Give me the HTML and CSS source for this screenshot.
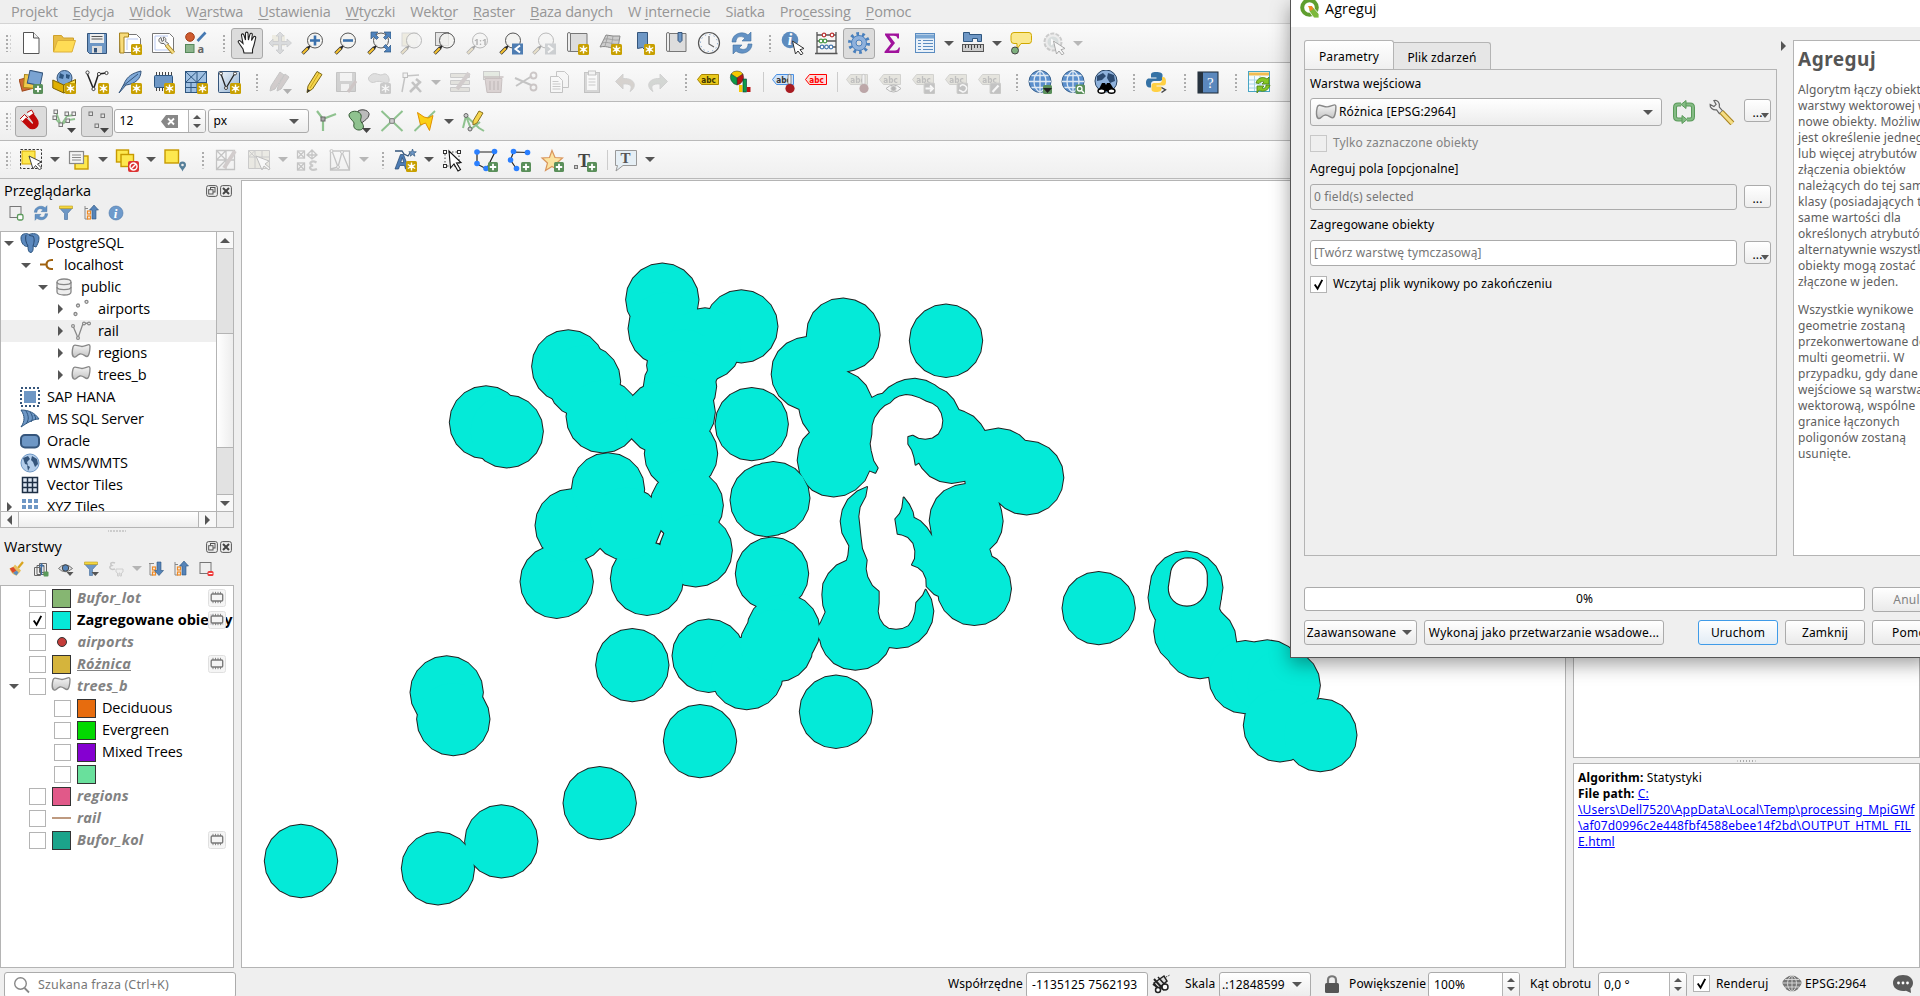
FILE: index.html
```
<!DOCTYPE html>
<html lang="pl">
<head>
<meta charset="utf-8">
<title>QGIS</title>
<link rel="stylesheet" href="styles.css">
</head>
<body>
<svg class="sprite" width="0" height="0">
<defs>
<linearGradient id="gGrey" x1="0" y1="0" x2="0" y2="1"><stop offset="0" stop-color="#f4f4f4"/><stop offset="1" stop-color="#c4c4c4"/></linearGradient>
<linearGradient id="gBlue" x1="0" y1="0" x2="1" y2="1"><stop offset="0" stop-color="#f2f6fa"/><stop offset="1" stop-color="#8fb0d2"/></linearGradient>
</defs>
<symbol id="new-badge" viewBox="0 0 24 24"><rect x="13" y="13" width="11" height="11" rx="1.500" fill="#c8a000"/><path d="M18.500 14.500v8M14.800 16.500l7.400 4M22.200 16.500l-7.400 4" stroke="#fff" stroke-width="1.400"/><circle cx="18.500" cy="18.500" r="2" fill="#fff"/></symbol>
<symbol id="add-badge" viewBox="0 0 24 24"><rect x="14" y="14" width="10" height="10" rx="1.500" fill="#5a8f5a"/><path d="M19 15.800v6.400M15.800 19h6.400" stroke="#fff" stroke-width="1.800"/></symbol>
<symbol id="corner-arrow" viewBox="0 0 24 24"><path d="M15 19h9l-4.500 5z" fill="#444"/></symbol>
<symbol id="lens" viewBox="0 0 24 24"><path d="M1.500 22.500l6-6" stroke="#333" stroke-width="3.400"/><path d="M1.800 22.200l5-5" stroke="#f7c331" stroke-width="2"/><path d="M7 17l3-3" stroke="#222" stroke-width="2"/><circle cx="14" cy="9.500" r="7.500" fill="#f2f2f0" fill-opacity=".85" stroke="#555"/></symbol>
<symbol id="file" viewBox="0 0 24 24"><path d="M4.500 1.500h10l5.500 5.500v15.500h-15.500z" fill="#fff" stroke="#555"/><path d="M14.500 1.500v5.500h5.500" fill="#eee" stroke="#555"/></symbol>
<symbol id="open" viewBox="0 0 24 24"><path d="M1.500 21V4.500h8l2 2.500h10v3" fill="#e8bd45" stroke="#cfa12c"/><path d="M1.500 21l4-11.500h18l-3.500 11.500z" fill="#ffdc55" stroke="#dcb03a"/></symbol>
<symbol id="save" viewBox="0 0 24 24"><path d="M2.500 2.500h19v20h-17l-2-2z" fill="#6e97c5" stroke="#35557b"/><rect x="5" y="3" width="14" height="9" fill="#eee"/><path d="M6.500 5.500h11M6.500 8h11" stroke="#555"/><rect x="7" y="15" width="10" height="7" fill="#ddd"/><rect x="9" y="17" width="3" height="4.500" fill="#35557b"/></symbol>
<symbol id="layout-new" viewBox="0 0 24 24"><path d="M1.500 3.500h17l4 4v14h-21z" fill="#fff" stroke="#777"/><path d="M1.500 2h9v4h-4.500v16H2z" fill="#f8dc7c" stroke="#a8831b"/><path d="M9 8h11M9 8v11" stroke="#b9c9f2"/><use href="#new-badge"/></symbol>
<symbol id="layout-mgr" viewBox="0 0 24 24"><path d="M1.500 2.500h17l4 4v15h-21z" fill="#fff" stroke="#777"/><path d="M4 5h13M4 5v14h14" stroke="#b9c9f2" fill="none"/><path d="M10 6.500c-3 1-3 5 1 6l2 0 2 2.500 2.500-2.500-3-2c1-3-.5-5-2.500-4l1 2.500-2 1.500z" fill="#eee" stroke="#666"/><path d="M15.500 14l7 8" stroke="#a98420" stroke-width="4"/><path d="M15.500 14l7 8" stroke="#f5dd84" stroke-width="2.200"/></symbol>
<symbol id="style" viewBox="0 0 24 24"><circle cx="6" cy="6" r="4.300" fill="#cf5c30" stroke="#a33e18"/><path d="M13.500 10l8-8.500" stroke="#4679b2" stroke-width="2.600"/><rect x="1.500" y="13.500" width="8.500" height="8" fill="#8cb48c" stroke="#55875a"/><text x="13.500" y="22" font-family="Noto Sans" font-size="11" font-weight="700" fill="#666">a</text></symbol>
<symbol id="hand" viewBox="0 0 24 24"><path d="M9 22l-1-4-4.500-6.500c-1-1.600 1-2.600 2-1.400L8 12.500 6.500 4.500c-.3-2 2-2.200 2.400-.5L10.500 9V2.500c0-1.900 2.400-1.900 2.500 0L13.400 9l1.600-5.800c.5-1.600 2.500-1 2.300.5L16.500 9.500l2-3.500c.9-1.300 2.600-.4 2.100 1.100L19 14l-1.500 4.500V22z" fill="#fff" stroke="#222" stroke-width="1.100"/></symbol>
<symbol id="pan-sel" viewBox="0 0 24 24"><rect x="4" y="4" width="13" height="11" fill="#e8dc9c"/><path d="M12 1l4 4h-2.500v5.500H19V8l4.500 4-4.500 4v-2.500h-5.500V19H16l-4 4-4-4h2.500v-5.500H5V16L1 12l4-4v2.500h5.500V5H8z" fill="#aab4c0" stroke="#7f8894" stroke-width=".8"/></symbol>
<symbol id="zoom-in" viewBox="0 0 24 24"><use href="#lens"/><path d="M14 4.500v10M9 9.500h10" stroke="#3b71ad" stroke-width="2.600"/></symbol>
<symbol id="zoom-out" viewBox="0 0 24 24"><use href="#lens"/><path d="M9 9.500h10" stroke="#3b71ad" stroke-width="2.600"/></symbol>
<symbol id="zoom-full" viewBox="0 0 24 24"><use href="#lens"/><path d="M4 1h7L8.500 3.500l3 3-2 2-3-3L4 8zM24 1h-7l2.500 2.500-3 3 2 2 3-3L24 8zM24 21h-7l2.500-2.500-3-3 2-2 3 3L24 14z" fill="#4f83bd" stroke="#2e5680" stroke-width=".7"/></symbol>
<symbol id="zoom-sel" viewBox="0 0 24 24"><rect x="2" y="2" width="15" height="13" fill="#eadc8f" stroke="#aaa"/><use href="#lens"/></symbol>
<symbol id="zoom-layer" viewBox="0 0 24 24"><rect x="2.500" y="1.500" width="13" height="13" fill="#e5e5e5" stroke="#888"/><use href="#lens"/></symbol>
<symbol id="zoom-native" viewBox="0 0 24 24"><use href="#lens"/><text x="8" y="13.500" font-size="9" font-weight="700" fill="#444" font-family="Noto Sans">1:1</text></symbol>
<symbol id="zoom-last" viewBox="0 0 24 24"><use href="#lens"/><rect x="13" y="12.500" width="11" height="11" fill="#4e7db2"/><path d="M21 14.500l-4.500 3.500 4.500 3.500" stroke="#fff" stroke-width="2" fill="none"/></symbol>
<symbol id="zoom-next" viewBox="0 0 24 24"><use href="#lens"/><rect x="13" y="12.500" width="11" height="11" fill="#8899aa"/><path d="M16 14.500l4.500 3.500-4.500 3.500" stroke="#fff" stroke-width="2" fill="none"/></symbol>
<symbol id="map-new" viewBox="0 0 24 24"><path d="M5 2.500h17v18H5z" fill="#ddd" stroke="#777"/><rect x="2.500" y="1.500" width="3" height="19" rx="1.500" fill="#eee" stroke="#777"/><use href="#new-badge"/></symbol>
<symbol id="map-3d" viewBox="0 0 24 24"><path d="M2 16L8 4l7 1 7 0-2 12c-6 2-10-3-18-1z" fill="#ccc" stroke="#888"/><path d="M4 12c7-2 10 2 17 1M6 8c6-1 9 2 15 1M10 4l-3 11M15 5l-2 12" stroke="#999" fill="none" stroke-width=".8"/><use href="#new-badge"/></symbol>
<symbol id="bm-new" viewBox="0 0 24 24"><path d="M6.500 1.500h10v20l-5-5-5 1z" fill="#6e97c5" stroke="#35557b"/><use href="#new-badge"/></symbol>
<symbol id="bm-show" viewBox="0 0 24 24"><path d="M5 2.500h17v18H5z" fill="#ddd" stroke="#777"/><rect x="2.500" y="1.500" width="3" height="19" rx="1.500" fill="#eee" stroke="#777"/><path d="M14 1.500h4v8l-2 2-2-2z" fill="#6e97c5" stroke="#35557b"/></symbol>
<symbol id="clock" viewBox="0 0 24 24"><circle cx="12" cy="12" r="10.500" fill="#f6f6f6" stroke="#555" stroke-width="1.200"/><circle cx="12" cy="12" r="8.500" fill="none" stroke="#7fa1c8" stroke-dasharray="1.300 3.150"/><path d="M12 5v8l5 3" stroke="#666" stroke-width="1.200" fill="none"/></symbol>
<symbol id="refresh" viewBox="0 0 24 24"><path d="M2 11C2 3 12-1 18 4l3-3v9h-9l3-3C10 4 6 6 6 11z" fill="#6392c5" stroke="#41719f" stroke-width=".6"/><path d="M22 13c0 8-10 12-16 7l-3 3v-9h9l-3 3c5 3 9 1 9-4z" fill="#6392c5" stroke="#41719f" stroke-width=".6"/></symbol>
<symbol id="cursor" viewBox="0 0 24 24"><path d="M11.500 10l3 13 2.500-3 3 4 2-1.600-3-3.700 4-1.200z" fill="#fff" stroke="#333"/></symbol>
<symbol id="identify" viewBox="0 0 24 24"><circle cx="9" cy="9" r="8.300" fill="#5c8bbe"/><text x="6.800" y="14" font-family="Liberation Serif" font-size="16" font-style="italic" font-weight="700" fill="#fff">i</text><use href="#cursor"/></symbol>
<symbol id="abacus" viewBox="0 0 24 24"><path d="M3 1v21M22 1v21M1 22.500h22.500M3 4h19M3 10h19M3 16h19" stroke="#555" stroke-width="1.300"/><g fill="#fff" stroke-width="1.200"><g stroke="#b33"><circle cx="10" cy="4" r="1.800"/><circle cx="18" cy="4" r="1.800"/></g><g stroke="#4a9a4a"><circle cx="7" cy="10" r="1.800"/><circle cx="11" cy="10" r="1.800"/></g><g stroke="#4a7ab0"><circle cx="8" cy="16" r="1.800"/><circle cx="12.500" cy="16" r="1.800"/><circle cx="17" cy="16" r="1.800"/></g></g></symbol>
<symbol id="gear" viewBox="0 0 24 24"><circle cx="12" cy="12" r="9" fill="none" stroke="#4a80bd" stroke-width="4" stroke-dasharray="2.600 3.054"/><circle cx="12" cy="12" r="7.500" fill="#8fb1dc" stroke="#4a80bd"/><circle cx="12" cy="12" r="3" fill="#ddd" stroke="#4a80bd"/></symbol>
<symbol id="sigma" viewBox="0 0 24 24"><path d="M5 2.500h14v5h-1.500c-.5-2-1.500-2.700-4-2.700H9.500L15 12l-6 7.500h6c2 0 3-1 3.800-3H20l-1 5.500H4.500v-1.300L11 12.500 5 4z" fill="#a0129c"/></symbol>
<symbol id="table" viewBox="0 0 24 24"><rect x="2.500" y="2.500" width="19" height="19" fill="#e9f1f9" stroke="#5b8cc0"/><path d="M3 5.500h18" stroke="#7ba7d3" stroke-width="4"/><path d="M5 9.500h3M10 9.500h10M5 12.500h3M10 12.500h10M5 15.500h3M10 15.500h10M5 18.500h3M10 18.500h10" stroke="#5b8cc0"/></symbol>
<symbol id="measure" viewBox="0 0 24 24"><path d="M2.500 1.500h6v2h12v7h-4v-3h-5v3h-9z" fill="#6e97c5" stroke="#2e5680"/><rect x="1.500" y="13.500" width="21" height="7" fill="#ccc" stroke="#555"/><path d="M4.500 14v3M7.500 14v3M10.500 14v5M13.500 14v3M16.500 14v3M19.500 14v3" stroke="#444"/></symbol>
<symbol id="tip" viewBox="0 0 24 24"><path d="M5 1.500h15q2.500 0 2.500 3v5q0 3-2.500 3h-8L8 18l0-5.500H5q-3 0-3-3v-5q0-3 3-3z" fill="#fae88e" stroke="#d0a800"/><circle cx="6" cy="19.500" r="3.500" fill="#7eb07e" stroke="#444"/></symbol>
<symbol id="action" viewBox="0 0 24 24"><circle cx="11" cy="11" r="8.500" fill="#ddd" stroke="#888" stroke-width="2" stroke-dasharray="4 1.300"/><circle cx="11" cy="11" r="5.500" fill="#9bb"/><path d="M9 7.500l5.500 3.500L9 14.500z" fill="#fff"/><use href="#cursor"/></symbol>
<symbol id="ds" viewBox="0 0 24 24"><rect x="1.500" y="8" width="12" height="12" transform="rotate(-15 7 14)" fill="#cf6a35" stroke="#a04a1d"/><rect x="5" y="5" width="13" height="13" fill="#f0c84c" stroke="#a88216" transform="rotate(5 11 11)"/><rect x="9.500" y="1.500" width="13" height="13" fill="#7aa3d2" stroke="#35557b" transform="rotate(12 16 8)"/><use href="#add-badge"/></symbol>
<symbol id="gpkg" viewBox="0 0 24 24"><circle cx="12.500" cy="8" r="7.500" fill="#7da7d6" stroke="#35557b"/><path d="M8 3l4 2-1 4-4-1zM14 4l4 1-1 4-3-1z" fill="#2e5680"/><path d="M.8 10l11 5v8L.8 18z" fill="#e0b000" stroke="#7d6200"/><path d="M11.800 15L23.500 9.500v8L11.800 23z" fill="#fbe04e" stroke="#7d6200"/><use href="#new-badge"/></symbol>
<symbol id="shp" viewBox="0 0 24 24"><path d="M2 3l6.500 16L13.500 4l8-1" fill="none" stroke="#222" stroke-width="1.500"/><g fill="#fff" stroke="#444"><circle cx="2.500" cy="2.500" r="1.600"/><circle cx="8.500" cy="19" r="1.600"/><circle cx="14" cy="4" r="1.600"/><circle cx="21.500" cy="3" r="1.600"/></g><use href="#new-badge"/></symbol>
<symbol id="feather" viewBox="0 0 24 24"><path d="M1 23L6 14C9 6 15 3 23 1c0 8-6 13-15 14z" fill="#7fa9d8" stroke="#35557b"/><path d="M5 16L20 4" stroke="#35557b"/><use href="#new-badge"/></symbol>
<symbol id="mem" viewBox="0 0 24 24"><path d="M5.500 2v19M8.500 2v19M11.500 2v19M14.500 2v19M17.500 2v12M20.500 2v12" stroke="#444"/><rect x="3.500" y="5.500" width="18" height="12" rx="1" fill="#6e97c5" stroke="#2e5680"/><use href="#new-badge"/></symbol>
<symbol id="mesh" viewBox="0 0 24 24"><rect x="1.500" y="1.500" width="21" height="21" fill="#9fc0e2" stroke="#2e5680"/><path d="M1.500 12.500h21M13 1.500v21M1.500 1.500L13 12.500M13 1.500L1.500 12.500M22.500 1.500L13 12.500M7 12.500v10M1.500 17.500h11" stroke="#2e5680"/><use href="#new-badge"/></symbol>
<symbol id="virt" viewBox="0 0 24 24"><rect x="1.500" y="1.500" width="21" height="21" rx="1" fill="url(#gBlue)" stroke="#35557b"/><path d="M4 4l5 14L17.500 4" fill="none" stroke="#222" stroke-width="1.300"/><g fill="#fff" stroke="#444"><circle cx="4" cy="3.500" r="1.500"/><circle cx="9" cy="18" r="1.500"/><circle cx="18" cy="3.500" r="1.500"/></g><use href="#new-badge"/></symbol>
<symbol id="pencil" viewBox="0 0 24 24"><path d="M6 22.500l1-6.500L16 1.500l5 3L11.500 19z" fill="#f6d64f" stroke="#7d6715"/><path d="M18 3L9 18" stroke="#c9a51c"/><path d="M6 23l.7-4 2.500 1.600z" fill="#333"/></symbol>
<symbol id="pencils" viewBox="0 0 24 24"><path d="M2 21l1-5L12 2l4 3L7 19zM9 21l1-5L17 4l4 3-8 12z" fill="#a88" stroke="#777"/></symbol>
<symbol id="save-ed" viewBox="0 0 24 24"><path d="M2.500 2.500h19v19h-19z" fill="#999" stroke="#777"/><rect x="6" y="3" width="12" height="8" fill="#eee"/><rect x="7" y="14" width="8" height="7" fill="#eee"/><path d="M14 22l8-11" stroke="#a77" stroke-width="3"/></symbol>
<symbol id="poly-add" viewBox="0 0 24 24"><path d="M4 5c5-4 8 2 13-1 5-1 7 9 3 9s-8-3-12-1S-2 9 4 5z" fill="#bbb" stroke="#888"/><rect x="13" y="13" width="11" height="11" rx="1.500" fill="#888"/><path d="M18.500 14.500v8M14.800 16.500l7.400 4M22.200 16.500l-7.400 4" stroke="#fff" stroke-width="1.400"/></symbol>
<symbol id="vertex" viewBox="0 0 24 24"><path d="M5 6l14-1M5 6L2 22" stroke="#777" stroke-width="1.500"/><rect x="3" y="3" width="4.500" height="4.500" fill="#eee" stroke="#666"/><path d="M10 22L20 12M12 12l9 10M16 9l5 4" stroke="#777" stroke-width="2.600"/></symbol>
<symbol id="form-ed" viewBox="0 0 24 24"><path d="M2.500 3.500h19v4h-19zM2.500 10.500h19v4h-19zM2.500 17.500h19v4h-19z" fill="#cbc6a8" stroke="#888"/><path d="M9 19L21 3" stroke="#a88" stroke-width="4"/></symbol>
<symbol id="del" viewBox="0 0 24 24"><rect x="2.500" y="1.500" width="16" height="8" fill="#bda" stroke="#888"/><path d="M4 8.500h17l-1 14H6z" fill="#c99" stroke="#966"/><path d="M2.500 7h20M9 11v9M13 11v9M17 11v9" stroke="#966" stroke-width="1.500"/></symbol>
<symbol id="cut" viewBox="0 0 24 24"><path d="M1 8l16 7M2 16L18 6" stroke="#777" stroke-width="2"/><circle cx="19.500" cy="5.500" r="3" fill="none" stroke="#977" stroke-width="1.800"/><circle cx="19.500" cy="17.500" r="3" fill="none" stroke="#977" stroke-width="1.800"/></symbol>
<symbol id="copy" viewBox="0 0 24 24"><path d="M9.500 1.500h8l4 4v12h-12z" fill="#f6f6f6" stroke="#777"/><path d="M3.500 6.500h8l4 4v12h-12z" fill="#fff" stroke="#777"/><path d="M5.500 11.500h6M5.500 14h8M5.500 16.500h8M5.500 19h8" stroke="#888"/></symbol>
<symbol id="paste" viewBox="0 0 24 24"><rect x="4.500" y="2.500" width="15" height="20" fill="#aaa" stroke="#777"/><rect x="7" y="5" width="10" height="15" fill="#fff"/><rect x="8.500" y="1" width="7" height="4" fill="#eee" stroke="#777"/><path d="M8.500 9h7M8.500 12h7M8.500 15h7" stroke="#888"/></symbol>
<symbol id="undo" viewBox="0 0 24 24"><path d="M10 4v4.500c13-.5 14 9 7 13 3-6 0-8-7-7.500V19L2.500 11.500z" fill="#b39a80" stroke="#999"/></symbol>
<symbol id="redo" viewBox="0 0 24 24"><path d="M14 4v4.500c-13-.5-14 9-7 13-3-6 0-8 7-7.500V19l7.500-7.500z" fill="#9a9" stroke="#999"/></symbol>
<symbol id="tag" viewBox="0 0 24 24"><path d="M1.500 9.500L5.500 4.500h17v10h-17z"/><text x="5.300" y="12.700" font-family="DejaVu Sans" font-size="8.500" font-weight="700" letter-spacing="0" textLength="14.500" lengthAdjust="spacingAndGlyphs" stroke="none" class="tagtext">abc</text></symbol>
<symbol id="chart" viewBox="0 0 24 24"><path d="M8 8L2 4a7 7 0 0 1 6-3 7 7 0 0 1 6 3z" fill="#f7c800" stroke="#333" stroke-width=".5"/><path d="M8 8l6-4a8 8 0 0 1-6 11z" fill="#b81414" stroke="#333" stroke-width=".5"/><path d="M8 8v7A8 8 0 0 1 2 4z" fill="#0d9a4a" stroke="#333" stroke-width=".5"/><rect x="10" y="15" width="3.500" height="7" fill="#f7c800"/><rect x="14" y="9" width="3.500" height="13" fill="#0d9a4a" stroke="#033" stroke-width=".6"/><rect x="18" y="17" width="3.500" height="5" fill="#b81414"/></symbol>
<symbol id="pin" viewBox="0 0 24 24"><path d="M17 5q2-1.500 3 0l0 9h-3z" fill="#eee" stroke="#666" stroke-width=".7"/><circle cx="19" cy="18.500" r="4.600" fill="#a81c22" stroke="none"/></symbol>
<symbol id="badge-arrow" viewBox="0 0 24 24"><rect x="13" y="13" width="11" height="11" rx="1.500" fill="#777"/><path d="M14.500 18.500h7M19 15.500l3 3-3 3" stroke="#fff" stroke-width="1.800" fill="none"/></symbol>
<symbol id="eye-b" viewBox="0 0 24 24"><path d="M8 18.500q7.500-7 15 0-7.500 7-15 0z" fill="#fff" stroke="#555"/><circle cx="15.500" cy="18.500" r="2.600" fill="#555"/></symbol>
<symbol id="badge-rot" viewBox="0 0 24 24"><rect x="13" y="13" width="11" height="11" rx="1.500" fill="#777"/><path d="M16 16.500a3.500 3.500 0 1 1 1.500 5M15 20l3 1.500" stroke="#fff" stroke-width="1.500" fill="none"/></symbol>
<symbol id="badge-pen" viewBox="0 0 24 24"><rect x="13" y="13" width="11" height="11" rx="1.500" fill="#777"/><path d="M15.500 22L21.500 15.500" stroke="#fff" stroke-width="2.200"/></symbol>
<symbol id="globe" viewBox="0 0 24 24"><circle cx="12" cy="11.500" r="11" fill="#5b8fcc" stroke="#38608c"/><path d="M12 .5v22M1 11.500h22M3.500 5.500h17M3.500 17.500h17M12 .5c-8 5-8 17 0 22M12 .5c8 5 8 17 0 22" stroke="#dfe9f3" fill="none" stroke-width="1.300"/></symbol>
<symbol id="web1" viewBox="0 0 24 24"><use href="#globe"/><rect x="15" y="15" width="9" height="9" rx="1.500" fill="#5a8f5a"/><path d="M15 18h9l-4.500 5z" fill="#222"/></symbol>
<symbol id="web2" viewBox="0 0 24 24"><use href="#globe"/><rect x="14.500" y="14.500" width="9.500" height="9.500" rx="1.500" fill="#5a8f5a"/><circle cx="18.700" cy="18.700" r="2.300" fill="none" stroke="#fff" stroke-width="1.300"/><path d="M20.500 20.500l2.500 2.500" stroke="#fff" stroke-width="1.500"/></symbol>
<symbol id="web3" viewBox="0 0 24 24"><circle cx="12" cy="11" r="11" fill="#8fb2dc" stroke="#26405f"/><path d="M3 6l6-3 3 3-4 4-5 1zM14 3l6 2 1 6-5 2-3-5z" fill="#2c4a70"/><path d="M4 21l4-8h3l1 2 1-2h3l5 8z" fill="#000"/><ellipse cx="7.500" cy="21" rx="3.500" ry="2.300" fill="#fff" stroke="#000" stroke-width="1.400"/><ellipse cx="17.500" cy="21" rx="3.500" ry="2.300" fill="#fff" stroke="#000" stroke-width="1.400"/></symbol>
<symbol id="python" viewBox="0 0 24 24"><path d="M11 2c-4 0-5 1-5 3v2.500h5.500v1H4C1.500 8.500 1 11 1 13s1 4.500 3 4.500h2V14c0-2 1.500-3 3-3h6c1.500 0 2.500-1 2.500-2.500V5c0-2-2-3-6.500-3z" fill="#3572a5"/><path d="M11 22c4 0 5.500-1 5.500-3v-2.500h-5v-1H18c2.500 0 3-1.500 3-4s-1-4.500-3-4.500h-1V10c0 2-1.500 3-3 3H9c-1.500 0-2.500 1-2.500 2.500V19c0 2 1 3 4.500 3z" fill="#ffd044"/><path d="M16.500 17.500l4 2.300-4 2.700" stroke="#444" stroke-width="1.400" fill="none"/></symbol>
<symbol id="help" viewBox="0 0 24 24"><rect x="2" y="2" width="20" height="21" fill="#5b88bd" stroke="#1b2733"/><path d="M2 2h5v21H2z" fill="#27333f"/><text x="11" y="18" font-family="Liberation Serif" font-size="15" fill="#fff">?</text></symbol>
<symbol id="tbl-refresh" viewBox="0 0 24 24"><rect x="1.500" y="1.500" width="21" height="20" fill="#f4fbff" stroke="#48a5c4"/><path d="M2 4h20" stroke="#f1bd52" stroke-width="3"/><path d="M7.500 6v15M13 6v15M2 10h20M2 14h20M2 18h20" stroke="#a9d4e6"/><path d="M9 13c1-5 7-7 11-4l2-2v7h-7l2-2c-2-1-4 0-5 1.500zM23 15c-1 5-7 8-11 5l-2 3v-7h7l-2 2c2 1 4 0 4-3z" fill="#86c725" stroke="#4a7d0f" stroke-width=".8"/></symbol>
<symbol id="magnet" viewBox="0 0 24 24"><path d="M4 9.500l7 7c3 3 8-1 5-5l-5-7" fill="none" stroke="#c00a0a" stroke-width="5.600"/><path d="M2.300 11.200l4-4M9 6.200l4.600-3.400" stroke="#fff" stroke-width="3"/><path d="M1 10l4.500-4.500 3.500 3.500M8 3.500L12.500 1l2.500 4" fill="none" stroke="#c00a0a"/></symbol>
<symbol id="snap-cfg" viewBox="0 0 24 24"><path d="M4 3l5 13 6-9 7-1M2 8l7 8M9 16l7-5 7-1" stroke="#8fc28f" stroke-width="1.800" fill="none"/><g fill="#eee" stroke="#777"><rect x="2" y="1" width="3.500" height="3.500"/><rect x="1" y="7" width="3.500" height="3.500"/><rect x="13" y="3" width="3.500" height="3.500"/><rect x="20" y="3" width="3.500" height="3.500"/><rect x="14" y="10" width="3.500" height="3.500"/><rect x="7" y="14" width="3.500" height="3.500"/></g></symbol>
<symbol id="snap-pts" viewBox="0 0 24 24"><g fill="#e2e2e2" stroke="#777"><rect x="4" y="3" width="3.500" height="3.500"/><rect x="16" y="5" width="3.500" height="3.500"/><rect x="10" y="15" width="3.500" height="3.500"/></g></symbol>
<symbol id="topo" viewBox="0 0 24 24"><path d="M3 2l6 8 13-5M9 10v12" stroke="#8fc28f" stroke-width="2.200" fill="none"/><rect x="7" y="8" width="4" height="4" fill="#aaa" stroke="#666"/></symbol>
<symbol id="overlap" viewBox="0 0 24 24"><path d="M11 2c5-3 12 0 11 4s-4 5-6 7-8-2-6-5z" fill="#bbb" stroke="#444"/><path d="M3 4c3-3 10-2 11 2s-2 4 1 8 1 7-3 7-6-3-5-6S-1 8 3 4z" fill="#8fc28f" stroke="#345a34"/></symbol>
<symbol id="cross" viewBox="0 0 24 24"><path d="M1.500 2l21 20M22.500 2L1.500 22" stroke="#8fc28f" stroke-width="2"/><rect x="9.700" y="9.700" width="4.600" height="4.600" rx="1" fill="#ccc" stroke="#777"/></symbol>
<symbol id="bolt" viewBox="0 0 24 24"><path d="M1.500 22L22 2" stroke="#8fc28f" stroke-width="1.800"/><path d="M4.500 3.500l6.500 4.500 4 1 5-2.500-3.500 15-4-7.500-5 2z" fill="#fcd116" stroke="#e09000"/></symbol>
<symbol id="trace" viewBox="0 0 24 24"><path d="M2 19L5 7l13 12 5 3M5 7l5 13 9-7" stroke="#8fc28f" stroke-width="2" fill="none"/><circle cx="5" cy="6.500" r="2" fill="#ccc" stroke="#666"/><circle cx="9" cy="20" r="2" fill="#ccc" stroke="#666"/><path d="M12 12l6-10 4 2-6 10-4 2z" fill="#f6d64f" stroke="#887020"/></symbol>
<symbol id="sel" viewBox="0 0 24 24"><rect x="1.500" y="1.500" width="21" height="19" fill="none" stroke="#333" stroke-dasharray="2.400 1.600"/><rect x="3" y="3" width="13" height="13" fill="#fde84f" stroke="#d8aa00"/><path d="M10 8l4 13 2.500-3.500 4 4.500 2-2-4-4 4-2z" fill="#fff" stroke="#444"/></symbol>
<symbol id="sel-form" viewBox="0 0 24 24"><rect x="8" y="8" width="13" height="13" fill="#fde84f" stroke="#c79a00" stroke-width="1.400"/><rect x="2.500" y="3.500" width="14" height="12" fill="#f4f4f4" stroke="#888" stroke-width="1.200"/><path d="M5 7h9M5 9.500h9M5 12h9" stroke="#888" stroke-width="1.200"/></symbol>
<symbol id="desel" viewBox="0 0 24 24"><rect x="1.500" y="2" width="12" height="12" fill="#fde84f" stroke="#c79a00" stroke-width="1.400"/><rect x="6" y="6.500" width="12.500" height="12" fill="#fde84f" stroke="#c79a00" stroke-width="1.400"/><rect x="13" y="13" width="11" height="11" rx="2" fill="#d33"/><circle cx="18.500" cy="18.500" r="3.500" fill="none" stroke="#fff" stroke-width="1.400"/><path d="M16 21l5-5" stroke="#fff" stroke-width="1.400"/></symbol>
<symbol id="sel-pin" viewBox="0 0 24 24"><rect x="2" y="2" width="13.500" height="13" fill="#fde84f" stroke="#c79a00" stroke-width="1.400"/><path d="M19.500 23.500c-1-3-3.500-4-3.500-6.500a3.500 3.500 0 0 1 7 0c0 2.500-2.500 3.500-3.500 6.500z" fill="#567f99"/><circle cx="19.500" cy="17" r="1.300" fill="#eee"/></symbol>
<symbol id="mesh-ed" viewBox="0 0 24 24"><path d="M2.500 2.500h18v19h-18zM2.500 12h18M12 2.500v19M2.500 2.500L12 12M12 2.500L2.500 12M2.500 21.500L12 12" fill="none" stroke="#777" stroke-width="1.300"/><path d="M10 20L21 3" stroke="#a88" stroke-width="4"/></symbol>
<symbol id="mesh-sel" viewBox="0 0 24 24"><path d="M1.500 2.500h21v18h-21z" fill="#ddd8b0" stroke="#888"/><path d="M1.500 9h21M8 2.500v18M15 2.500v18M1.500 2.500L8 9M8 2.500L1.500 9" stroke="#888"/><path d="M9 8l6 14 2-4 5 4 1-2-5-4 4-3z" fill="#fff" stroke="#666"/></symbol>
<symbol id="mesh-x" viewBox="0 0 24 24"><g fill="none" stroke="#777" stroke-width="1.300"><rect x="2.500" y="3" width="7" height="7"/><path d="M2.500 3l7 7M9.500 3l-7 7M17 2l5 5-5 4-5-4zM12 7h10M17 2v9"/><rect x="2.500" y="15" width="7" height="7"/><path d="M2.500 15l7 7M9.500 15l-7 7"/></g><path d="M21.500 14.500c-5-3-9 1.500-3.500 3.200-6 1-2 6 4 3.300" stroke="#888" stroke-width="2.200" fill="none"/></symbol>
<symbol id="mesh-t" viewBox="0 0 24 24"><path d="M2.500 3h19v19h-19zM4 3l6 16 4-15 7 17M2.500 21l8-2" fill="none" stroke="#777" stroke-width="1.300"/><g fill="#eee" stroke="#777"><circle cx="3.500" cy="3" r="1.500"/><circle cx="14" cy="4" r="1.500"/><circle cx="10" cy="19" r="1.500"/></g></symbol>
<symbol id="annot" viewBox="0 0 24 24"><path d="M2 21L7.500 6.500h3L16 21h-3.500l-1-3.500H6.800L5.500 21zM7.800 14.500h3L9.200 9.500z" fill="#4c7cb4" stroke="#24466e" stroke-width=".7"/><path d="M2 3h7l2 3 4 2 2-3" stroke="#35557b" fill="none" stroke-width="1.300"/><path d="M19.500 1l1 2.700 2.800.1-2.200 1.700.8 2.700-2.400-1.600-2.300 1.600.8-2.700-2.200-1.700 2.800-.1z" fill="#6e97c5" stroke="#2e5680" stroke-width=".7"/><use href="#new-badge"/></symbol>
<symbol id="annot-sel" viewBox="0 0 24 24"><rect x="4" y="4" width="14" height="14" fill="none" stroke="#444" stroke-dasharray="1.500 2"/><g fill="#fff" stroke="#333"><rect x="2.500" y="2.500" width="3" height="3"/><rect x="16.500" y="2.500" width="3" height="3"/><rect x="2.500" y="16.500" width="3" height="3"/></g><path d="M8 3l1.500 17 3.500-4 4 7 2.500-1.500-4-6.500 4.500-.5z" fill="#fff" stroke="#111" stroke-width="1.100"/></symbol>
<symbol id="an-poly" viewBox="0 0 24 24"><path d="M3 4h18l-8.500 17L3 16z" fill="none" stroke="#222" stroke-width="1.200"/><g fill="#2a7fff"><circle cx="3" cy="4" r="2.800"/><circle cx="20.500" cy="3.500" r="2.800"/><circle cx="3" cy="15.500" r="2.800"/><circle cx="12" cy="20.500" r="2.800"/></g><use href="#add-badge"/></symbol>
<symbol id="an-line" viewBox="0 0 24 24"><path d="M21 4.500L6.500 4 3.500 12l6 9" fill="none" stroke="#222" stroke-width="1.200"/><g fill="#2a7fff"><circle cx="6.500" cy="3.500" r="2.800"/><circle cx="20.500" cy="4.500" r="2.800"/><circle cx="3.500" cy="12" r="2.800"/><circle cx="9.500" cy="20.500" r="2.800"/></g><use href="#add-badge"/></symbol>
<symbol id="an-star" viewBox="0 0 24 24"><path d="M12 2.500l3 7 7.500.5-5.700 5 2 7.500-6.800-4-6.500 4 2-7.500L2 10l7.500-.5z" fill="#fbe3a0" stroke="#d9955b" stroke-width="1.200"/><use href="#add-badge"/></symbol>
<symbol id="an-text" viewBox="0 0 24 24"><text x="5" y="19" font-family="Liberation Serif" font-weight="700" font-size="18" fill="#444">T</text><rect x="1.500" y="17.500" width="3" height="3" fill="#ccc" stroke="#777"/><use href="#add-badge"/></symbol>
<symbol id="an-callout" viewBox="0 0 24 24"><path d="M1.500 2.500h21v15H9L2 23l1.500-5.500h-2z" fill="#e6eff5" stroke="#999"/><text x="6.500" y="15" font-family="Liberation Serif" font-size="15" font-weight="700" fill="#555">T</text></symbol>
<symbol id="float" viewBox="0 0 12 12"><rect x=".6" y=".6" width="10.800" height="10.800" rx="2" fill="#eee" stroke="#555"/><rect x="4.500" y="2.500" width="4.500" height="4.500" fill="none" stroke="#555"/><rect x="2.700" y="4.700" width="4.300" height="4.300" fill="#eee" stroke="#555"/></symbol>
<symbol id="close" viewBox="0 0 12 12"><rect x=".6" y=".6" width="10.800" height="10.800" rx="2" fill="#eee" stroke="#555"/><path d="M3 3l6 6M9 3l-6 6" stroke="#444" stroke-width="2"/></symbol>
<symbol id="add-layer" viewBox="0 0 16 16"><rect x="2" y="1.500" width="11" height="11" fill="none" stroke="#777"/><rect x="9.500" y="9.500" width="5.500" height="5.500" rx="1.500" fill="#fff" stroke="#5a9a5a" stroke-width="1.300"/></symbol>
<symbol id="funnel" viewBox="0 0 16 16"><path d="M1.500 3l5 5.500v6h3v-6L14.500 3z" fill="#6e97c5" stroke="#41699a" stroke-width=".6"/><path d="M1.500 1h13v2.500h-13z" fill="#f4d73f" stroke="#c0a020" stroke-width=".6"/></symbol>
<symbol id="collapse" viewBox="0 0 16 16"><path d="M2 1v13h3M2 3.500h3" stroke="#888" fill="none"/><rect x="4.500" y="6" width="3" height="3" fill="none" stroke="#f08a24" stroke-width="1.200"/><rect x="4.500" y="11" width="3" height="3" fill="none" stroke="#f08a24" stroke-width="1.200"/><path d="M11 0l4.500 5H13v9H9V5H6.500z" fill="#5684b8" stroke="#2e5680" stroke-width=".6"/></symbol>
<symbol id="expand" viewBox="0 0 16 16"><path d="M2 2v12h3M1 2.500h5" stroke="#888" fill="none"/><rect x="4.500" y="6" width="3" height="3" fill="none" stroke="#f08a24" stroke-width="1.200"/><rect x="4.500" y="11" width="3" height="3" fill="none" stroke="#f08a24" stroke-width="1.200"/><path d="M11 14.500l4.500-5H13V1H9v8.500H6.500z" fill="#5684b8" stroke="#2e5680" stroke-width=".6"/></symbol>
<symbol id="info" viewBox="0 0 16 16"><circle cx="8" cy="8" r="7" fill="#6e9acb" stroke="#4a76a8" stroke-width=".6"/><text x="5.800" y="12.500" font-family="Liberation Serif" font-size="13" font-style="italic" font-weight="700" fill="#fff">i</text></symbol>
<symbol id="brush" viewBox="0 0 16 16"><path d="M15 1L10 7" stroke="#d9a520" stroke-width="2.200"/><path d="M1.500 7.500l4-2 1.500-2 6 6-1.500 2-3 3C5 14 2.500 11 1.500 7.500z" fill="#e8c060"/><path d="M1.800 7.500l3.500-1.500 3 3.500-3.500 2.500z" fill="#d9482e"/><path d="M5 12l3.500-2.500 2 2-2 3z" fill="#5b8cc0"/></symbol>
<symbol id="group-add" viewBox="0 0 16 16"><path d="M1.500 6.500h6v8h-6zM4 4.500h7v9H4zM6.500 2.500h7v9h-7z" fill="#eee" stroke="#666"/><path d="M8.500 14V4M6.500 6l2-3 2 3" stroke="#3f6ea5" stroke-width="1.200" fill="none"/><rect x="10.500" y="10.500" width="5" height="5" rx="1" fill="#5a9a5a"/></symbol>
<symbol id="eye" viewBox="0 0 16 16"><path d="M.5 7.500Q7 0 14.500 7.500 7 14 .5 7.500z" fill="#ddd" stroke="#777"/><circle cx="7.500" cy="7" r="3.200" fill="#5684b8" stroke="#444"/><path d="M8.500 11h7l-3.500 4z" fill="#555"/></symbol>
<symbol id="eps" viewBox="0 0 16 16"><path d="M7 2C4 .5 1 2.500 4 4.500 0 5.500 2 9.500 7 8" stroke="#888" stroke-width="1.500" fill="none"/><path d="M8 8h7v3l-1.500 1v3h-1.500v-3h-1v3H9.500v-3L8 11z" fill="#eee" stroke="#999"/></symbol>
<symbol id="remove" viewBox="0 0 16 16"><rect x="2" y="1.500" width="11" height="11" fill="none" stroke="#777"/><rect x="9.500" y="10" width="6" height="5" rx="1.500" fill="#e33"/><path d="M10.500 12.500h4" stroke="#fff" stroke-width="1.200"/></symbol>
<symbol id="elephant" viewBox="0 0 20 20"><path d="M1 5C1 0 7 0 9 1.500 12 0 19 0 19 5c0 4-2 7-3 9l-3-1c.5 3 0 6-2 6.500-2.500 0-3-2.500-3-6C4 14 1 10 1 5z" fill="#5b88bd" stroke="#2e5680"/><path d="M6 2c-1 4 0 8 2 11M13 3c2 3 1 7 0 10M9 2c1 1 4 1 4 1" stroke="#27486f" fill="none"/></symbol>
<symbol id="conn" viewBox="0 0 20 20"><path d="M3 9.500h6M16 5h-1.500c-3 0-5 2-5 4.500s2 4.500 5 4.500H16" stroke="#a0620e" stroke-width="2.200" fill="none"/></symbol>
<symbol id="db" viewBox="0 0 20 20"><path d="M3 5c0-4 14-4 14 0v10c0 4-14 4-14 0z" fill="#eee" stroke="#888" stroke-width="1.300"/><path d="M3 5c0 3.500 14 3.500 14 0M3 10c0 3.500 14 3.500 14 0" stroke="#888" fill="none" stroke-width="1.300"/></symbol>
<symbol id="pts" viewBox="0 0 20 20"><g fill="#eee" stroke="#888" stroke-width="1.300"><circle cx="4.500" cy="15" r="1.500"/><circle cx="7" cy="6.500" r="1.500"/><circle cx="15.500" cy="2.800" r="1.500"/></g></symbol>
<symbol id="lines" viewBox="0 0 20 20"><path d="M2 5l5 12L12 2.500l6-.5" stroke="#888" stroke-width="1.300" fill="none"/><g fill="#fff" stroke="#888" stroke-width="1.200"><circle cx="2" cy="5" r="1.400"/><circle cx="7" cy="17" r="1.400"/><circle cx="13" cy="2.500" r="1.400"/><circle cx="18" cy="2.500" r="1.400"/></g></symbol>
<symbol id="poly" viewBox="0 0 20 20"><path d="M2 4C3 0 7 3.500 11 3.500s8-4 8 0-1 10-3 10-4-3-7-2.500-4 4-6 3S1 8 2 4z" fill="url(#gGrey)" stroke="#888" stroke-width="1.300"/></symbol>
<symbol id="hana" viewBox="0 0 20 20"><rect x="1" y="1" width="18" height="18" fill="none" stroke="#35557b" stroke-width="2" stroke-dasharray="2 2"/><rect x="4" y="4" width="12" height="12" fill="#6e97c5"/></symbol>
<symbol id="mssql" viewBox="0 0 20 20"><path d="M1 1c8 0 14 3 18 9-6 0-12 4-18 8 4-6 4-11 0-17z" fill="#6e97c5" stroke="#2e5680"/><path d="M6 2c3 5 3 9 0 13M10 3c3 4 3 7 1 10M14 6c2 2 2 4 1 5" stroke="#2e5680" fill="none"/></symbol>
<symbol id="oracle" viewBox="0 0 20 20"><rect x="1" y="4" width="18" height="12.500" rx="4" fill="#6e97c5" stroke="#35557b" stroke-width="2"/></symbol>
<symbol id="wms" viewBox="0 0 20 20"><circle cx="10" cy="10" r="9" fill="#b3cdea" stroke="#6e97c5"/><path d="M3 5l5-2 2 3-3 3 1 3-3-1zM12 3l5 3 1 5-3 3-2-5-2-2zM7 12l3 2-2 4z" fill="#35557b"/></symbol>
<symbol id="vt" viewBox="0 0 20 20"><path d="M2.500 2.500h15v15h-15zM2.500 7.500h15M2.500 12.500h15M7.500 2.500v15M12.500 2.500v15" fill="#dce6f2" stroke="#1d2f45" stroke-width="1.500"/></symbol>
<symbol id="xyz" viewBox="0 0 20 20"><path d="M2 2h4v4H2zM8 2h4v4H8zM14 2h4v4h-4zM2 8h4v4H2zM8 8h4v4H8zM14 8h4v4h-4zM2 14h4v4H2zM8 14h4v4H8zM14 14h4v4h-4z" fill="#6e97c5"/></symbol>
<symbol id="chip" viewBox="0 0 18 18"><rect x=".5" y=".5" width="17" height="17" rx="2" fill="#f4f4f4" fill-opacity=".9" stroke="#e0e0e0"/><path d="M5 2.800v11.400M7.500 2.800v11.400M10 2.800v11.400M12.500 2.800v11.400" stroke="#888"/><rect x="3.200" y="5" width="11.500" height="7" rx="1" fill="#f4f4f4" stroke="#777" stroke-width="1.300"/></symbol>
<symbol id="check" viewBox="0 0 16 16"><path d="M4 8l3 4.500L12 3" stroke="#000" stroke-width="2" fill="none"/></symbol>
<symbol id="search" viewBox="0 0 18 18"><circle cx="7.500" cy="7.500" r="5.800" fill="none" stroke="#888" stroke-width="1.400"/><path d="M11.500 12l4.500 4.500" stroke="#888" stroke-width="1.800"/></symbol>
<symbol id="lock" viewBox="0 0 18 20"><path d="M5 10V6c0-5 8-5 8 0v4" fill="none" stroke="#777" stroke-width="2.200"/><rect x="2" y="9" width="14" height="10" rx="1.500" fill="#555"/></symbol>
<symbol id="extent" viewBox="0 0 20 20"><path d="M3 9L13 2l3 5-9 8zM7 3l8 9" stroke="#222" stroke-width="1.500" fill="#ddd"/><path d="M3 5l10 11M2 10l8 6" stroke="#222" stroke-width="2"/><circle cx="7" cy="16" r="2.500" fill="#fff" stroke="#222" stroke-width="1.500"/><circle cx="14" cy="13" r="3" fill="#fff" stroke="#222" stroke-width="1.500"/><path d="M15 3l4-2" stroke="#222" stroke-dasharray="1 1"/></symbol>
<symbol id="crs" viewBox="0 0 20 20"><ellipse cx="10" cy="9" rx="9.500" ry="6.500" fill="#777"/><circle cx="10" cy="9.500" r="8" fill="#777"/><path d="M1 9h18M3 5.500h14M3 13h14M10 1v17M10 1c-6 4-6 13 0 17M10 1c6 4 6 13 0 17" stroke="#ddd" fill="none" stroke-width=".9"/></symbol>
<symbol id="bubble" viewBox="0 0 22 22"><path d="M11 2c6 0 10 3.500 10 8 0 2-1 4-2.500 5.500L19 20l-5-2.300C6 19 1 15 1 10s4-8 10-8z" fill="#5a5a5a"/><circle cx="6.500" cy="10" r="1.400" fill="#fff"/><circle cx="11" cy="10" r="1.400" fill="#fff"/><circle cx="15.500" cy="10" r="1.400" fill="#fff"/></symbol>
<symbol id="qgis" viewBox="0 0 20 20"><circle cx="9.500" cy="9.500" r="7.300" fill="none" stroke="#5f9e2e" stroke-width="4"/><path d="M9 9l4 0 6 7v4h-5l-5-7z" fill="#7cb93b" stroke="#fff" stroke-width=".8"/><path d="M8 8h4l1.500 3-3 2z" fill="#f08a24"/></symbol>
<symbol id="iterate" viewBox="0 0 24 24"><path d="M9 4.500H6q-3 0-3 3v9q0 3 3 3h5M15 19.500h3q3 0 3-3v-9q0-3-3-3h-5" fill="none" stroke="#5a9a5a" stroke-width="4"/><path d="M9 4.500H6q-3 0-3 3v9q0 3 3 3h5M15 19.500h3q3 0 3-3v-9q0-3-3-3h-5" fill="none" stroke="#84bb84" stroke-width="2"/><path d="M14 .5v8L9 4.500zM10 15.500v8l5-4z" fill="#84bb84" stroke="#5a9a5a"/></symbol>
<symbol id="wrench" viewBox="0 0 24 24"><path d="M5 1.500c3-1 6 2 5 6l3 3.500-3 2.500L7.500 10C4 10.500 1 8 1.500 5l3.500 2 2-2z" fill="#eee" stroke="#666" stroke-width="1.100"/><path d="M12 12l10 10.500" stroke="#a98420" stroke-width="5"/><path d="M12 12l10 10.500" stroke="#f5dd84" stroke-width="3"/></symbol>
<polygon id="c" points="0,-36.200 11.190,-34.430 21.280,-29.290 29.290,-21.280 34.430,-11.190 36.200,0 34.430,11.190 29.290,21.280 21.280,29.290 11.190,34.430 0,36.200 -11.190,34.430 -21.280,29.290 -29.290,21.280 -34.430,11.190 -36.200,0 -34.430,-11.190 -29.290,-21.280 -21.280,-29.290 -11.190,-34.430"/>
</svg>

<nav class="menu"><span>Projekt</span><span><u>E</u>dycja</span><span><u>W</u>idok</span><span>W<u>a</u>rstwa</span><span><u>U</u>stawienia</span><span><u>W</u>tyczki</span><span>Wekt<u>o</u>r</span><span><u>R</u>aster</span><span><u>B</u>aza danych</span><span>W <u>i</u>nternecie</span><span>Siatka</span><span>Pro<u>c</u>essing</span><span><u>P</u>omoc</span></nav>

<div class="bar"><i class="grip first"></i>
<svg><use href="#file"/></svg><svg><use href="#open"/></svg><svg><use href="#save"/></svg><svg><use href="#layout-new"/></svg><svg><use href="#layout-mgr"/></svg><svg><use href="#style"/></svg><i class="grip"></i>
<span class="on"><svg><use href="#hand"/></svg></span><svg class="off"><use href="#pan-sel"/></svg><svg><use href="#zoom-in"/></svg><svg><use href="#zoom-out"/></svg><svg><use href="#zoom-full"/></svg><svg class="off"><use href="#zoom-sel"/></svg><svg><use href="#zoom-layer"/></svg><svg class="off"><use href="#zoom-native"/></svg><svg><use href="#zoom-last"/></svg><svg class="off"><use href="#zoom-next"/></svg><svg><use href="#map-new"/></svg><svg><use href="#map-3d"/></svg><svg><use href="#bm-new"/></svg><svg><use href="#bm-show"/></svg><svg><use href="#clock"/></svg><svg><use href="#refresh"/></svg><i class="grip"></i>
<svg><use href="#identify"/></svg><svg><use href="#abacus"/></svg><span class="on"><svg><use href="#gear"/></svg></span><svg><use href="#sigma"/></svg><svg><use href="#table"/></svg><b class="dd"></b><svg><use href="#measure"/></svg><b class="dd"></b><svg><use href="#tip"/></svg><svg class="off"><use href="#action"/></svg><b class="dd off"></b></div>

<div class="bar"><i class="grip first"></i>
<svg><use href="#ds"/></svg><svg><use href="#gpkg"/></svg><svg><use href="#shp"/></svg><svg><use href="#feather"/></svg><svg><use href="#mem"/></svg><svg><use href="#mesh"/></svg><svg><use href="#virt"/></svg><i class="grip"></i>
<svg class="off"><use href="#pencils"/><use href="#corner-arrow"/></svg><svg><use href="#pencil"/></svg><svg class="off"><use href="#save-ed"/></svg><svg class="off"><use href="#poly-add"/></svg><svg class="off"><use href="#vertex"/></svg><b class="dd off"></b><svg class="off"><use href="#form-ed"/></svg><svg class="off"><use href="#del"/></svg><svg class="off"><use href="#cut"/></svg><svg class="off"><use href="#copy"/></svg><svg class="off"><use href="#paste"/></svg><svg class="off"><use href="#undo"/></svg><svg class="off"><use href="#redo"/></svg><i class="grip narrow"></i>
<svg class="tag-y"><use href="#tag"/></svg><svg><use href="#chart"/></svg><i class="vline"></i><svg class="tag-b"><use href="#tag"/><use href="#pin"/></svg><svg class="tag-r"><use href="#tag"/></svg><i class="vline"></i>
<svg class="tag-g off"><use href="#tag"/><use href="#pin"/></svg><svg class="tag-g off"><use href="#tag"/><use href="#eye-b"/></svg><svg class="tag-g off"><use href="#tag"/><use href="#badge-arrow"/></svg><svg class="tag-g off"><use href="#tag"/><use href="#badge-rot"/></svg><svg class="tag-g off"><use href="#tag"/><use href="#badge-pen"/></svg><i class="grip"></i>
<svg><use href="#web1"/></svg><svg><use href="#web2"/></svg><svg><use href="#web3"/></svg><i class="grip"></i><svg><use href="#python"/></svg><i class="grip"></i><svg><use href="#help"/></svg><i class="grip"></i><svg><use href="#tbl-refresh"/></svg></div>

<div class="bar"><i class="grip first"></i>
<span class="on"><svg><use href="#magnet"/></svg></span><svg><use href="#snap-cfg"/><use href="#corner-arrow"/></svg><span class="on"><svg><use href="#snap-pts"/><use href="#corner-arrow"/></svg></span>
<div class="field spin w92 tol"><span>12</span><svg class="clr" viewBox="0 0 17 13"><path d="M0 6.500L5 0h12v13H5z" fill="#888"/><path d="M7 3.500l6 6M13 3.500l-6 6" stroke="#fff" stroke-width="1.800"/></svg><em></em></div>
<div class="field combo w101"><span>px</span><b class="dd"></b></div>
<svg><use href="#topo"/></svg><svg><use href="#overlap"/><use href="#corner-arrow"/></svg><svg><use href="#cross"/></svg><svg><use href="#bolt"/></svg><b class="dd"></b><svg><use href="#trace"/></svg></div>

<div class="bar last"><i class="grip first"></i>
<svg><use href="#sel"/></svg><b class="dd"></b><svg><use href="#sel-form"/></svg><b class="dd"></b><svg><use href="#desel"/></svg><b class="dd"></b><svg><use href="#sel-pin"/></svg><i class="grip"></i>
<svg class="off"><use href="#mesh-ed"/></svg><svg class="off"><use href="#mesh-sel"/></svg><b class="dd off"></b><svg class="off"><use href="#mesh-x"/></svg><svg class="off"><use href="#mesh-t"/></svg><b class="dd off"></b><i class="grip narrow"></i>
<svg><use href="#annot"/></svg><b class="dd"></b><svg><use href="#annot-sel"/></svg><svg><use href="#an-poly"/></svg><svg><use href="#an-line"/></svg><svg><use href="#an-star"/></svg><svg><use href="#an-text"/></svg><i class="vline"></i><svg><use href="#an-callout"/></svg><b class="dd"></b></div>

<main class="work">
<aside class="left">
<header class="dock">Przeglądarka<svg><use href="#float"/></svg><svg><use href="#close"/></svg></header>
<div class="tools"><svg><use href="#add-layer"/></svg><svg><use href="#refresh"/></svg><svg><use href="#funnel"/></svg><svg><use href="#collapse"/></svg><svg><use href="#info"/></svg></div>
<section class="browser">
<ul class="tree">
<li><b class="tw open"></b><svg><use href="#elephant"/></svg>PostgreSQL</li>
<li class="l1"><b class="tw open"></b><svg><use href="#conn"/></svg>localhost</li>
<li class="l2"><b class="tw open"></b><svg><use href="#db"/></svg>public</li>
<li class="l3"><b class="tw"></b><svg><use href="#pts"/></svg>airports</li>
<li class="l3 hover"><b class="tw"></b><svg><use href="#lines"/></svg>rail</li>
<li class="l3"><b class="tw"></b><svg><use href="#poly"/></svg>regions</li>
<li class="l3"><b class="tw"></b><svg><use href="#poly"/></svg>trees_b</li>
<li><b class="tw none"></b><svg><use href="#hana"/></svg>SAP HANA</li>
<li><b class="tw none"></b><svg><use href="#mssql"/></svg>MS SQL Server</li>
<li><b class="tw none"></b><svg><use href="#oracle"/></svg>Oracle</li>
<li><b class="tw none"></b><svg><use href="#wms"/></svg>WMS/WMTS</li>
<li><b class="tw none"></b><svg><use href="#vt"/></svg>Vector Tiles</li>
<li><b class="tw"></b><svg><use href="#xyz"/></svg>XYZ Tiles</li>
</ul>
<div class="vbar"><b class="up"></b><i></i><b class="down"></b></div>
<div class="hbar"><b class="lt"></b><i></i><b class="rt"></b></div><div class="corner"></div>
</section>
<div class="hsplit"></div>
<header class="dock second">Warstwy<svg><use href="#float"/></svg><svg><use href="#close"/></svg></header>
<div class="tools low"><svg><use href="#brush"/></svg><svg><use href="#group-add"/></svg><svg><use href="#eye"/></svg><svg><use href="#funnel"/><path d="M8.500 11h7.500l-3.700 4z" fill="#555"/></svg><svg class="off eps"><use href="#eps"/></svg><b class="dd off"></b><svg class="exp"><use href="#expand"/></svg><svg><use href="#collapse"/></svg><svg><use href="#remove"/></svg></div>
<ul class="layers">
<li><b class="tw none"></b><s></s><i class="sw" style="background:#86b672"></i><span class="dim">Bufor_lot</span><svg class="chip"><use href="#chip"/></svg></li>
<li><b class="tw none"></b><s><svg><use href="#check"/></svg></s><i class="sw" style="background:#06e8d8"></i><span class="act">Zagregowane obiekty</span><svg class="chip"><use href="#chip"/></svg></li>
<li><b class="tw none"></b><s></s><i class="dot"></i><span class="dim">airports</span></li>
<li><b class="tw none"></b><s></s><i class="sw" style="background:#d5b43c"></i><span class="dim cur">Różnica</span><svg class="chip"><use href="#chip"/></svg></li>
<li><b class="tw open"></b><s></s><svg class="pg"><use href="#poly"/></svg><span class="dim">trees_b</span></li>
<li class="sub"><s></s><i class="sw" style="background:#e76c0e"></i><span>Deciduous</span></li>
<li class="sub"><s></s><i class="sw" style="background:#02d900"></i><span>Evergreen</span></li>
<li class="sub"><s></s><i class="sw" style="background:#8500d1"></i><span>Mixed Trees</span></li>
<li class="sub"><s></s><i class="sw" style="background:#69e09c"></i></li>
<li><b class="tw none"></b><s></s><i class="sw" style="background:#e15989"></i><span class="dim">regions</span></li>
<li><b class="tw none"></b><s></s><i class="ln"></i><span class="dim">rail</span></li>
<li><b class="tw none"></b><s></s><i class="sw" style="background:#1ba48b"></i><span class="dim">Bufor_kol</span><svg class="chip"><use href="#chip"/></svg></li>
</ul>
</aside>
<section class="map">
<svg width="1323" height="786" viewBox="242 180.600 1323 786">
<defs><g id="buffers">
<use href="#c" x="662.300" y="299.300"/><use href="#c" x="741.300" y="326"/><use href="#c" x="568.300" y="366"/><use href="#c" x="486" y="422"/><use href="#c" x="506.700" y="431"/><use href="#c" x="584" y="381"/><use href="#c" x="602.700" y="416"/><use href="#c" x="664.700" y="328.300"/><use href="#c" x="705" y="344"/><use href="#c" x="683.300" y="365"/><use href="#c" x="680" y="386"/><use href="#c" x="678.700" y="411.700"/><use href="#c" x="661.700" y="417.300"/><use href="#c" x="681" y="453.300"/><use href="#c" x="686.700" y="505"/><use href="#c" x="695.700" y="550"/><use href="#c" x="647" y="578.300"/><use href="#c" x="556.700" y="581.300"/><use href="#c" x="571.700" y="525"/><use href="#c" x="608" y="489"/><use href="#c" x="626.700" y="523.300"/><use href="#c" x="751.700" y="423.700"/><use href="#c" x="773.300" y="497.700"/><use href="#c" x="766.700" y="499.700"/><use href="#c" x="772" y="573.300"/><use href="#c" x="946" y="340.300"/>
<use href="#c" x="632.300" y="664.700"/><use href="#c" x="700" y="740.700"/><use href="#c" x="836" y="711.300"/><use href="#c" x="599.700" y="802.700"/><use href="#c" x="501.300" y="841"/><use href="#c" x="438" y="868"/><use href="#c" x="446.700" y="692"/><use href="#c" x="453.300" y="718.700"/><use href="#c" x="708.700" y="655.300"/><use href="#c" x="746.700" y="672.700"/><use href="#c" x="783.300" y="630"/><use href="#c" x="776.700" y="645"/><use href="#c" x="301" y="860.600"/><use href="#c" x="1098.700" y="607.700"/>
<use href="#c" x="1186.300" y="587.300"/><use href="#c" x="1184.700" y="597.300"/><use href="#c" x="1190.300" y="630.700"/><use href="#c" x="1200" y="641.700"/><use href="#c" x="1245.300" y="676.700"/><use href="#c" x="1267.300" y="676"/><use href="#c" x="1283.700" y="685"/><use href="#c" x="1280" y="725"/><use href="#c" x="1320.300" y="734.700"/>
<g transform="translate(740 280) scale(.33333)">
<path vector-effect="non-scaling-stroke" d="M200 170L205 130L220 98L245 74L275 59L310 54L344 60L375 75L399 100L415 130L419 164L413 200L398 231L373 254L342 268L319 273L352 290L377 315L395 353L412 344L428 340L446 322L470 308L495 299L525 295L557 301L583 314L598 325L618 335L640 358L656 389L673 395L700 409L722 432L734 452L775 444L809 450L837 464L855 481L893 487L925 503L949 527L965 558L970 592L964 627L949 657L925 681L893 697L860 702L825 697L795 682L775 664L783 690L788 722L783 755L769 785L748 806L755 829L770 837L793 860L808 891L813 925L807 960L792 990L768 1013L737 1029L703 1034L669 1029L638 1013L614 990L598 960L596 947L583 941L560 918L559 895L549 873L535 861L516 853L525 835L526 812L520 788L504 770L485 762L473 760L466 716L480 700L487 682L491 651L507 672L518 695L521 712L540 722L560 742L577 768L569 721L574 688L590 655L613 632L645 617L677 611L676 601L635 608L600 602L570 587L547 563L537 546L527 553L523 530L516 508L505 491L505 470L518 466L535 475L556 478L578 474L596 462L607 442L610 420L605 398L594 379L577 367L560 361L540 351L516 343L498 341L478 345L463 353L450 366L434 374L418 389L402 412L395 435L394 462L389 490L392 510L400 542L413 563L406 577L388 570L374 600L346 627L315 643L281 648L247 643L217 628L203 614L180 577L173 540L178 505L190 477L210 456L190 428L182 405L178 386L145 371L117 345L100 312L95 282L100 243L115 214L140 190L170 176Z"/>
<path vector-effect="non-scaling-stroke" d="M381 620L352 633L324 658L308 689L302 722L307 757L328 796L325 825L320 841L290 855L266 880L250 910L247 943L250 975L257 995L242 1028L234 1040L234 1068L241 1080L245 1097L258 1122L282 1148L312 1163L346 1168L382 1163L412 1147L437 1121L447 1100L470 1103L505 1098L535 1082L559 1057L575 1025L580 992L573 957L557 928L549 945L529 967L526 995L519 1018L506 1037L487 1046L468 1048L446 1045L430 1034L418 1015L413 993L416 968L416 933L396 916L382 890L377 866L380 839L366 805L361 765L358 735L355 708L359 680L376 648Z"/>
</g></g></defs>
<use href="#buffers" class="edge"/><use href="#buffers" class="body"/>
<g class="hole"><path d="M661 530.300l2.700 2.700-4 10.300-3.700-.7z"/>
<path d="M1188 557.300C1198 557.300 1207 565 1207.300 575V585C1206 598 1197 605.600 1187 605.700C1176 605.500 1168 598 1168.300 587L1170.300 574C1171 564 1179 557.500 1188 557.300Z"/></g>
</svg>
</section>
<aside class="right"><div class="results"></div><div class="hsplit"></div>
<div class="viewer"><b>Algorithm:</b> Statystyki<br><b>File path:</b> <a>C:<br>\Users\Dell7520\AppData\Local\Temp\processing_MpiGWf<br>\af07d0996c2e448fbf4588ebee14f2bd\OUTPUT_HTML_FIL<br>E.html</a></div></aside>
</main>

<footer class="status">
<div class="field locator"><svg><use href="#search"/></svg>Szukana fraza (Ctrl+K)</div>
<label class="coord">Współrzędne</label><div class="field w122">-1135125 7562193</div><svg class="ext"><use href="#extent"/></svg>
<label class="scale">Skala</label><div class="field combo w92 sc"><span>.:12848599</span><b class="dd"></b></div><svg class="lock"><use href="#lock"/></svg>
<label class="mag">Powiększenie</label><div class="field spin w92"><span>100%</span><em></em></div>
<label class="rot">Kąt obrotu</label><div class="field spin w89"><span>0,0 °</span><em></em></div>
<s class="cb"><svg><use href="#check"/></svg></s><label class="ren">Renderuj</label><svg class="crs"><use href="#crs"/></svg><label>EPSG:2964</label><svg class="bub"><use href="#bubble"/></svg>
</footer>

<div class="dialog">
<header class="title"><svg><use href="#qgis"/></svg>Agreguj</header>
<div class="content">
<div class="tabs"><span class="tab sel">Parametry</span><span class="tab">Plik zdarzeń</span></div>
<section class="pane">
<label class="a">Warstwa wejściowa</label>
<div class="row r1"><div class="field combo grow"><svg><use href="#poly"/></svg><span>Różnica [EPSG:2964]</span><b class="dd"></b></div><svg class="it"><use href="#iterate"/></svg><svg class="wr"><use href="#wrench"/></svg><button class="more dda">...</button></div>
<div class="row r2"><s class="cb dis"></s><span class="gray">Tylko zaznaczone obiekty</span></div>
<label class="b">Agreguj pola [opcjonalne]</label>
<div class="row r3"><div class="field grow flat">0 field(s) selected</div><button class="more">...</button></div>
<label class="c">Zagregowane obiekty</label>
<div class="row r3"><div class="field grow ph">[Twórz warstwę tymczasową]</div><button class="more dda">...</button></div>
<div class="row r5"><s class="cb"><svg><use href="#check"/></svg></s><span>Wczytaj plik wynikowy po zakończeniu</span></div>
</section>
<i class="fold"></i>
<article class="helpbox"><h2>Agreguj</h2>
<p>Algorytm łączy obiekty<br>warstwy wektorowej w<br>nowe obiekty. Możliwe<br>jest określenie jednego<br>lub więcej atrybutów<br>złączenia obiektów<br>należących do tej samej<br>klasy (posiadających te<br>same wartości dla<br>określonych atrybutów),<br>alternatywnie wszystkie<br>obiekty mogą zostać<br>złączone w jeden.</p>
<p>Wszystkie wynikowe<br>geometrie zostaną<br>przekonwertowane do<br>multi geometrii. W<br>przypadku, gdy dane<br>wejściowe są warstwą<br>wektorową, wspólne<br>granice łączonych<br>poligonów zostaną<br>usunięte.</p></article>
</div>
<div class="prog"><div class="field pb">0%</div><button class="gray">Anuluj</button></div>
<div class="btns"><button class="adv">Zaawansowane<b class="dd"></b></button><button class="batch">Wykonaj jako przetwarzanie wsadowe...</button><button class="run">Uruchom</button><button class="cls">Zamknij</button><button class="hlp">Pomoc</button></div>
</div>
</body>
</html>
```
FILE: styles.css
```
* { box-sizing: border-box; }
body { margin: 0; width: 1920px; height: 996px; overflow: hidden; position: relative; background: #efefef; color: #000; font: 12px/16px "Noto Sans", "Open Sans", sans-serif; letter-spacing: .14px; display: flex; flex-direction: column; }
.sprite { position: absolute; }
svg { flex: none; display: block; }
ul { list-style: none; margin: 0; padding: 0; }
b, i, s, em { font-style: normal; text-decoration: none; }
button { font: inherit; color: #000; letter-spacing: .2px; }

.menu { height: 23px; flex: none; padding: 1px 0 0 11px; display: flex; gap: 15px; font: 14.5px/22px "Open Sans", sans-serif; letter-spacing: -.19px; color: #969696; }
.menu u { text-underline-offset: 2px; }

.bar { flex: none; height: 39px; display: flex; align-items: center; background: linear-gradient(#fafafa, #efefef); border-top: 1px solid #b9b9b9; }
.bar.last { height: 38px; }
.menu + .bar { border-top-color: #d4d4d4; }
.bar > svg { width: 24px; height: 24px; margin: 0 4.5px; }
.bar svg { overflow: visible; }
.off { opacity: .38; filter: grayscale(.6); }
.grip { width: 18px; height: 18px; flex: none; background: radial-gradient(circle, #aaa .7px, transparent 1px) 9px 0 / 4px 4px repeat; clip-path: inset(0 4px 0 9px); }
.grip.first { width: 14.5px; background-position: 5px 0; clip-path: inset(0 4px 0 5px); }
.grip.narrow { width: 17px; }
.vline { width: 8.5px; height: 20px; flex: none; background: linear-gradient(90deg, transparent 5px, #ccc 5px, #ccc 6px, transparent 6px); }
.last .vline { width: 7.5px; }
.on { width: 32px; height: 31px; margin-right: 1px; flex: none; display: grid; place-items: center; background: #dcdcdc; border: 1px solid #a9a9a9; border-radius: 3px; }
.on svg { width: 24px; height: 24px; }
.dd { width: 15px; flex: none; display: grid; place-items: center; }
.dd::after { content: ""; border: 5px solid transparent; border-top-color: #555; border-bottom: 0; }

.field { height: 25px; background: #fff; border: 1px solid #ababab; border-radius: 3px; display: flex; align-items: center; padding-left: 5px; white-space: nowrap; flex: none; overflow: hidden; }
.bar .field { height: 24px; }
.field span { flex: 1; }
.combo { background: linear-gradient(#fff, #ececec); padding-right: 6px; }
.spin em { width: 17px; height: 100%; border-left: 1px solid #b4b4b4; background: linear-gradient(#fff, #eee); display: flex; flex-direction: column; align-items: center; justify-content: center; gap: 5px; }
.spin em::before { content: ""; border: 4.5px solid transparent; border-bottom-color: #555; border-top: 0; }
.spin em::after { content: ""; border: 4.5px solid transparent; border-top-color: #555; border-bottom: 0; }
.w92 { width: 92px; } .w101 { width: 101px; margin: 0 1px 0 2px; } .w122 { width: 122px; } .w89 { width: 89px; }
.clr { width: 17px; height: 13px; margin-right: 10px; }

.tag-y { fill: #e9c91c; stroke: #a88400; --t: #403500; }
.tag-b { fill: #cfe3fa; stroke: #4a90e2; --t: #333; }
.tag-r { fill: #fbdcdc; stroke: #f00; --t: #f00; }
.tag-g { fill: #cfc9a2; stroke: #998; --t: #666; }
.tagtext { fill: var(--t); }

.work { height: 790px; flex: none; display: flex; border-top: 1px solid #b9b9b9; }
.left { width: 234px; flex: none; display: flex; flex-direction: column; }
.dock { height: 23px; flex: none; display: flex; align-items: center; font: 14.5px/20px "Open Sans", sans-serif; letter-spacing: -.05px; padding: 0 2px 0 4px; gap: 2px; }
.dock svg { width: 12px; height: 12px; }
.dock svg:first-of-type { margin-left: auto; }
.tools { height: 28px; flex: none; padding: 0 0 7px 8px; display: flex; align-items: center; gap: 9px; }
.tools.low { height: 26px; padding-bottom: 5px; }
.tools svg { width: 16px; height: 16px; }
.tools .dd { margin: 0 -5px 0 -4px; }
.browser { height: 297px; flex: none; margin-top: 1px; border: 1px solid #b4b4b4; background: #fff; display: grid; grid-template: 279px 16px / 215px 17px; overflow: hidden; }
.tree { height: 279px; overflow: hidden; font: 14.5px/22px "Open Sans", sans-serif; letter-spacing: -.15px; }
.tree li { height: 22px; display: flex; align-items: center; padding-left: 0; }
.tree .l1 { padding-left: 17px; } .tree .l2 { padding-left: 34px; } .tree .l3 { padding-left: 51px; }
.tree li svg { width: 20px; height: 20px; margin: 0 7px 0 3px; }
.hover { background: #efefef; }
.tw { width: 16px; flex: none; display: grid; place-items: center; }
.tw::after { content: ""; border: 5px solid transparent; border-left-color: #555; border-right: 0; }
.tw.open::after { border: 5px solid transparent; border-top-color: #555; border-bottom: 0; }
.tw.none::after { display: none; }
.vbar { background: #e2e2e2; border-left: 1px solid #b4b4b4; display: flex; flex-direction: column; }
.vbar b { height: 17px; background: #f8f8f8; display: grid; place-items: center; border-bottom: 1px solid #b4b4b4; }
.vbar .down { border: 0; border-top: 1px solid #b4b4b4; }
.vbar i { height: 115px; margin: 84px 0 auto; background: linear-gradient(90deg, #fff, #ededed); border: solid #b4b4b4; border-width: 1px 0; }
.up::after { content: ""; border: 5px solid transparent; border-bottom-color: #555; border-top: 0; }
.down::after { content: ""; border: 5px solid transparent; border-top-color: #555; border-bottom: 0; }
.hbar { border-top: 1px solid #b4b4b4; display: flex; }
.hbar b { width: 17px; display: grid; place-items: center; background: #f8f8f8; }
.hbar i { flex: 1; background: linear-gradient(#fff, #ededed); border: solid #b4b4b4; border-width: 0 1px; }
.lt::after { content: ""; border: 5px solid transparent; border-right-color: #555; border-left: 0; }
.rt::after { content: ""; border: 5px solid transparent; border-left-color: #555; border-right: 0; }
.corner { background: #efefef; border: solid #b4b4b4; border-width: 1px 0 0 1px; }
.hsplit { height: 5px; flex: none; background: radial-gradient(circle, #aaa .7px, transparent 1px) center / 3px 4px repeat-x; clip-path: inset(0 calc(50% - 9px)); }
.dock.second { margin-top: 2px; }
.layers { flex: 1; margin: 1px 0 0; padding-top: 1px; border: 1px solid #b4b4b4; background: #fff; font: 14.5px/22px "Open Sans", sans-serif; letter-spacing: -.15px; overflow: hidden; }
.layers li { height: 22px; display: flex; align-items: center; padding-left: 5px; white-space: nowrap; position: relative; }
.layers .sub { padding-left: 53px; }
.layers .tw { margin-right: 7px; }
.layers s, .cb { width: 17px; height: 17px; flex: none; border: 1px solid #b4b4b4; background: #fff; }
.layers s svg, .cb svg { width: 15px; height: 15px; }
.sw { width: 19px; height: 19px; margin: 0 6px; border: 1px solid #333; flex: none; }
.dot { width: 10px; height: 10px; margin: 0 11px 0 10.500px; border-radius: 50%; background: #c43c39; border: 1px solid #333; }
.ln { width: 19px; height: 2px; margin: 0 6px; background: #be9a80; }
.pg { width: 20px; height: 20px; margin: 0 6px 0 5px; }
.dim { font-weight: 700; font-style: italic; color: #828282; font-size: 14.5px; letter-spacing: .2px; }
.cur { text-decoration: underline; }
.act { font-weight: 700; font-size: 14.5px; letter-spacing: 0; }
.chip { width: 18px; height: 18px; position: absolute; right: 7px; top: 2px; }

.map { width: 1325px; margin: 1px 0 0 7px; border: 1px solid #b4b4b4; background: #fff; overflow: hidden; flex: none; }
.edge { fill: #222; stroke: #222; stroke-width: 2; stroke-linejoin: round; }
.body { fill: #04ead8; }
.hole { fill: #fff; stroke: #222; stroke-width: 1.1; }
.right { flex: 1; margin: 1px 0 0 7px; display: flex; flex-direction: column; }
.results { height: 578px; background: #fff; border: 1px solid #b4b4b4; }
.viewer { flex: 1; background: #fff; border: 1px solid #b4b4b4; padding: 6px 4px; white-space: nowrap; }
.viewer a { color: #00f; text-decoration: underline; }

.status { height: 27px; flex: none; display: flex; align-items: center; padding: 4px 0 0 4px; white-space: nowrap; }
.status > * { flex: none; }
.status .field { height: 26px; margin-top: 2px; }
.locator { width: 232px; color: #777; gap: 7px; padding-left: 8px; font-size: 12.5px; }
.locator svg { width: 18px; height: 18px; }
.coord { width: 78px; margin-left: 712px; }
.ext { width: 20px; height: 20px; margin: 0 14px 0 3px; }
.scale { width: 34px; }
.sc { padding-left: 2px; }
.lock { width: 18px; height: 20px; margin: 0 8px 0 12px; }
.mag { width: 79px; }
.rot { width: 68px; margin-left: 10px; }
.status .cb { margin: 0 6px 0 6px; }
.ren { width: 66px; }
.crs { width: 20px; height: 20px; margin-right: 3px; }
.bub { width: 22px; height: 22px; margin-left: auto; margin-right: 6px; }

.dialog { position: absolute; left: 1290px; top: 0; width: 640px; height: 658px; background: #efefef; border: solid #555; border-width: 0 0 1px 1px; box-shadow: 0 6px 18px rgba(0,0,0,.38); }
.title { height: 27px; background: #fff; display: flex; align-items: flex-start; padding: 0 0 0 9px; gap: 5px; font: 14.3px/18px "Open Sans", sans-serif; letter-spacing: .1px; }
.title svg { width: 20px; height: 20px; margin-top: -2px; }
.content { height: 529px; padding: 13px 0 0 13px; display: grid; grid-template: 29px 487px / 473px 16px 1fr; }
.tabs { display: flex; align-items: flex-end; }
.tab { width: 97px; height: 27px; border: 1px solid #b4b4b4; border-left: 0; border-bottom: 0; background: #e6e6e6; border-radius: 0 3px 0 0; text-align: center; line-height: 29px; }
.tab.sel { width: 90px; height: 30px; margin-bottom: -1px; border-left: 1px solid #b4b4b4; background: linear-gradient(#fff, #efefef); border-radius: 3px 3px 0 0; line-height: 31px; }
.pane { grid-area: 2 / 1; border: 1px solid #b4b4b4; padding: 6px 5px 0 5px; }
.pane > label { display: block; height: 18px; }
.row { display: flex; align-items: center; }
.grow { flex: 1; padding-left: 3px; }
.pane .field { height: 26px; }
.r1 { margin-top: 4px; height: 28px; }
.pane .r1 .field { height: 28px; }
.r1 .field { padding-left: 4px; margin-right: 9px; padding-right: 6px; }
.r1 .field svg { width: 22px; height: 22px; margin: 3px 2px 0 0; }
.it { width: 26px; height: 24px; margin-right: 11px; }
.wr { width: 27px; height: 26px; margin-right: 9px; }
.more { width: 27px; height: 23px; border: 1px solid #ababab; border-radius: 3px; background: linear-gradient(#fff, #eee); padding: 0; line-height: 25px; position: relative; margin-bottom: 4px; overflow: hidden; }
.more.dda::after { content: ""; position: absolute; right: 1px; bottom: 3px; border: 4px solid transparent; border-top: 5px solid #555; border-bottom: 0; }
.r2 { height: 18px; margin-top: 8px; gap: 6px; }
.r5 { height: 18px; margin-top: 9px; gap: 6px; }
.gray { color: #828282; }
.cb.dis { background: #efefef; border-color: #c8c8c8; }
.b { margin-top: 9px; }
.c { margin-top: 7px; }
.r3 { margin-top: 5px; height: 26px; }
.r3 .field { margin-right: 7px; color: #777; }
.r3 .more { margin-bottom: 1px; }
.flat { background: #efefef; }
.pane .flat { background: #efefef; }
.fold { grid-area: 1 / 2; margin: 1px 0 0 4px; border: 5px solid transparent; border-left-color: #555; border-right: 0; width: 0; height: 0; }
.helpbox { grid-area: 1 / 3 / 3; border: 1px solid #b4b4b4; background: #fff; padding: 6px 4px; color: #5e5e5e; white-space: nowrap; overflow: hidden; letter-spacing: .1px; }
.helpbox h2 { margin: 0 0 11px; font-size: 19px; line-height: 24px; color: #555; letter-spacing: .5px; }
.helpbox p { margin: 0 0 12px; }
.prog { margin: 31px 0 0 13px; display: flex; gap: 7px; }
.pb { width: 561px; height: 24px; justify-content: center; padding: 0; }
.dialog .prog button, .btns button { height: 25px; border: 1px solid #ababab; border-radius: 3px; background: linear-gradient(#fff, #eaeaea); padding: 0; display: flex; align-items: center; justify-content: center; white-space: nowrap; flex: none; }
.prog button { width: 80px; color: #828282; }
.btns { margin: 8px 0 0 13px; display: flex; }
.btns .adv { width: 113px; margin-right: 7px; gap: 3px; }
.btns .batch { width: 240px; margin-right: 34px; }
.btns .run { width: 80px; margin-right: 7px; }
.btns button.run { border-color: #3f9be8; background: linear-gradient(#fff, #e2ecf5); }
.btns .cls { width: 80px; margin-right: 7px; }
.btns .hlp { width: 80px; }
```
